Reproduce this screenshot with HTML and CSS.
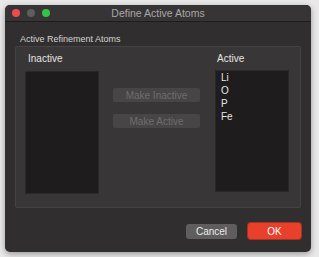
FILE: index.html
```html
<!DOCTYPE html>
<html lang="en">
<head>
    <meta charset="UTF-8">
    <meta name="viewport" content="width=device-width, initial-scale=1.0">
    <title>Define Active Atoms</title>
    <link rel="stylesheet" href="styles.css">
</head>
<body>
    <div class="window">
        <div class="titlebar">
            <div class="lights">
                <span class="light red"></span>
                <span class="light gray"></span>
                <span class="light green"></span>
            </div>
            <div class="title">Define Active Atoms</div>
        </div>
        <div class="body">
            <div class="group-label">Active Refinement Atoms</div>
            <div class="group">
                <div class="column left">
                    <div class="col-label">Inactive</div>
                    <div class="list"></div>
                </div>
                <div class="middle">
                    <button class="move" disabled>Make Inactive</button>
                    <button class="move" disabled>Make Active</button>
                </div>
                <div class="column right">
                    <div class="col-label">Active</div>
                    <div class="list">
                        <div class="item">Li</div>
                        <div class="item">O</div>
                        <div class="item">P</div>
                        <div class="item">Fe</div>
                    </div>
                </div>
            </div>
            <div class="actions">
                <button class="btn cancel">Cancel</button>
                <button class="btn ok">OK</button>
            </div>
        </div>
    </div>
</body>
</html>
```

FILE: styles.css
```css
body {
    margin: 0;
    width: 319px;
    height: 257px;
    background-color: #e9e9e9;
    font-family: "Liberation Sans", Arial, sans-serif;
    overflow: hidden;
}
.window {
    margin: 5px 0 0 5px;
    width: 306px;
    height: 247px;
    background-color: #302e2e;
    border-radius: 5px;
    box-shadow: 0 2px 6px rgba(0, 0, 0, 0.35);
    display: flex;
    flex-direction: column;
}
.titlebar {
    height: 16px;
    border-bottom: 1px solid #1e1d1d;
    background-color: #363434;
    border-radius: 5px 5px 0 0;
    display: flex;
    align-items: center;
    position: relative;
}
.lights {
    display: flex;
    gap: 7px;
    padding-left: 7px;
}
.light {
    width: 8px;
    height: 8px;
    border-radius: 50%;
}
.red { background-color: #ee4b4b; }
.gray { background-color: #5e5c5c; }
.green { background-color: #35c245; }
.title {
    position: absolute;
    left: 0;
    right: 0;
    text-align: center;
    color: #a9a7a7;
    font-size: 10.5px;
}
.body {
    padding: 12px 10px 0 10px;
    display: flex;
    flex-direction: column;
}
.group-label {
    color: #d6d4d4;
    font-size: 9px;
    padding-left: 5px;
    height: 10px;
    line-height: 10px;
}
.group {
    margin-top: 2px;
    height: 162px;
    box-sizing: border-box;
    background-color: #383636;
    border: 1px solid #444242;
    border-radius: 2px;
    display: flex;
    padding: 6px 0 0 9px;
}
.column {
    display: flex;
    flex-direction: column;
}
.col-label {
    color: #e6e4e4;
    font-size: 10px;
    height: 12px;
    line-height: 12px;
    padding-left: 3px;
}
.right .col-label {
    padding-left: 2px;
}
.left .list {
    margin-top: 6px;
    height: 123px;
}
.right {
    margin-left: 15px;
}
.right .list {
    margin-top: 5px;
    height: 122px;
}
.list {
    width: 74px;
    background-color: #1e1c1c;
    border: 1px solid #2a2828;
    box-sizing: border-box;
    padding: 0 0 0 5px;
}
.item {
    color: #e8e6e6;
    font-size: 10px;
    height: 13px;
    line-height: 13px;
}
.middle {
    display: flex;
    flex-direction: column;
    gap: 12px;
    margin-left: 14px;
    padding-top: 35px;
}
.move {
    width: 87px;
    height: 14px;
    padding: 0;
    border: none;
    border-radius: 2px;
    background-color: #474545;
    color: #6f6d6d;
    font-family: "Liberation Sans", Arial, sans-serif;
    font-size: 10px;
}
.actions {
    display: flex;
    justify-content: flex-end;
    gap: 11px;
    margin-top: 15px;
    padding-right: 0;
}
.btn {
    height: 16px;
    padding: 0;
    border: none;
    border-radius: 3px;
    font-family: "Liberation Sans", Arial, sans-serif;
    font-size: 10px;
    color: #ececec;
}
.cancel {
    width: 51px;
    background-color: #5f5d5d;
    margin-top: 1px;
    height: 15px;
}
.ok {
    width: 53px;
    background-color: #e8402a;
    box-shadow: 0 0 0 1px #a33322;
    color: #ffffff;
}
```
